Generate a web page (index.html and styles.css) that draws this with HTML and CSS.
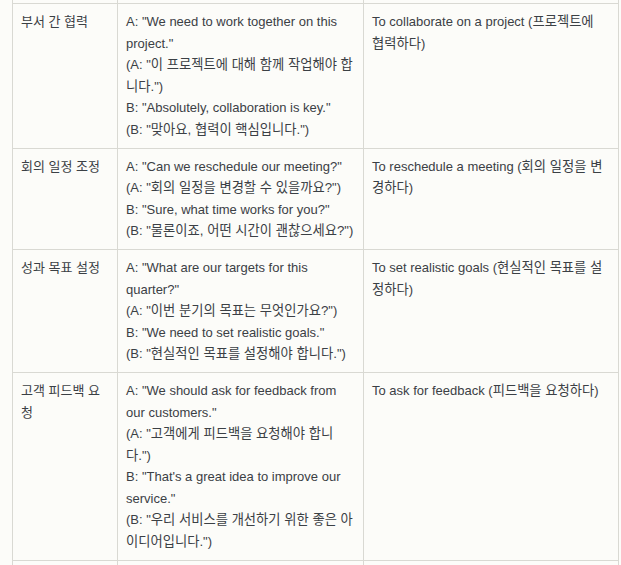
FILE: index.html
```html
<!DOCTYPE html>
<html lang="ko">
<head>
<meta charset="utf-8">
<link rel="stylesheet" href="styles.css">
</head>
<body>
<div class="page">
<table class="phrases">
<colgroup><col class="c1"><col class="c2"><col class="c3"></colgroup>
<tbody>
<tr class="cut"><td></td><td></td><td></td></tr>
<tr>
<td>부서 간 협력</td>
<td>A: "We need to work together on this project."<br>(A: "<span class="ko">이 프로젝트에 대해 함께 작업해야 합니다.</span>")<br>B: "Absolutely, collaboration is key."<br>(B: "<span class="ko">맞아요, 협력이 핵심입니다.</span>")</td>
<td>To collaborate on a project (<span class="ko">프로젝트에 협력하다</span>)</td>
</tr>
<tr>
<td>회의 일정 조정</td>
<td>A: "Can we reschedule our meeting?"<br>(A: "<span class="ko">회의 일정을 변경할 수 있을까요?</span>")<br>B: "Sure, what time works for you?"<br>(B: "<span class="ko">물론이죠, 어떤 시간이 괜찮으세요?</span>")</td>
<td>To reschedule a meeting (<span class="ko">회의 일정을 변경하다</span>)</td>
</tr>
<tr>
<td>성과 목표 설정</td>
<td>A: "What are our targets for this quarter?"<br>(A: "<span class="ko">이번 분기의 목표는 무엇인가요?</span>")<br>B: "We need to set realistic goals."<br>(B: "<span class="ko">현실적인 목표를 설정해야 합니다.</span>")</td>
<td>To set realistic goals (<span class="ko">현실적인 목표를 설정하다</span>)</td>
</tr>
<tr>
<td>고객 피드백 요청</td>
<td>A: "We should ask for feedback from our customers."<br>(A: "<span class="ko">고객에게 피드백을 요청해야 합니다.</span>")<br>B: "That's a great idea to improve our service."<br>(B: "<span class="ko">우리 서비스를 개선하기 위한 좋은 아이디어입니다.</span>")</td>
<td>To ask for feedback (<span class="ko">피드백을 요청하다</span>)</td>
</tr>
<tr class="cut"><td></td><td></td><td></td></tr>
</tbody>
</table>
</div>
</body>
</html>
```
FILE: styles.css
```css
html, body {
  margin: 0;
  padding: 0;
  background: #fcfcf9;
}
.page {
  padding-left: 12px;
  height: 565px;
  overflow: hidden;
}
.phrases {
  border-collapse: collapse;
  table-layout: fixed;
  width: 606px;
  font-family: "Liberation Sans", Arial, "Noto Sans CJK KR", sans-serif;
  font-size: 13px;
  line-height: 21.5px;
  color: #3b4045;
}
.c1 { width: 105px; }
.c2 { width: 246px; }
.c3 { width: 255px; }
.phrases td {
  border: 1px solid #d9d9d3;
  padding: 7px 8px 7.5px 8px;
  vertical-align: top;
}
.phrases td:last-child {
  padding-right: 11px;
}
.ko {
  font-size: 13.3px;
}
.phrases tr.cut td {
  height: 3px;
  padding: 0;
  border-top: none;
}
.phrases tr.cut:last-child td {
  height: 10px;
  border-bottom: none;
}
```
